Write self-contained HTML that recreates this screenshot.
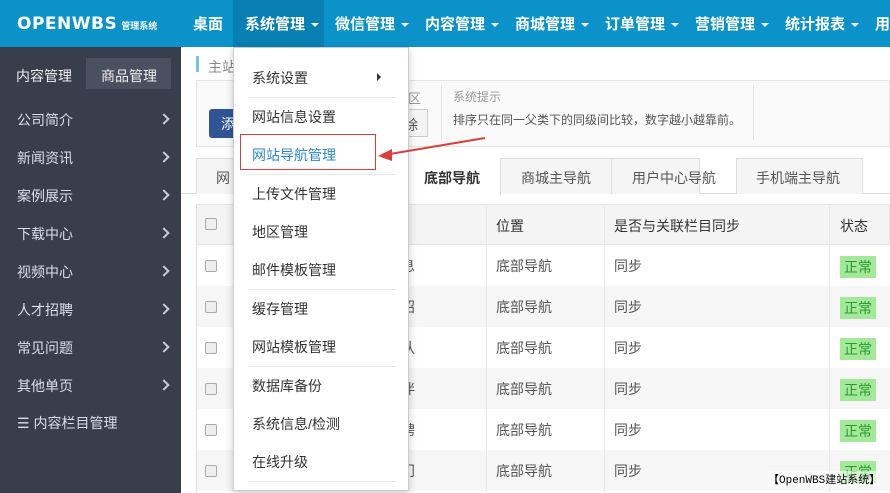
<!DOCTYPE html>
<html><head><meta charset="utf-8"><style>
*{margin:0;padding:0;box-sizing:border-box}
body{width:890px;height:493px;overflow:hidden;background:#fff;font-family:"Liberation Sans","Microsoft YaHei","Noto Sans CJK SC",sans-serif;font-size:14px;color:#333;position:relative}
.a{position:absolute}
.top{left:0;top:0;width:890px;height:47px;background:#0b93c9}
.nav{top:0;height:47px;line-height:49px;color:#fff;font-weight:bold;font-size:15px}
.car{display:inline-block;width:0;height:0;border-left:4px solid transparent;border-right:4px solid transparent;border-top:4px solid #fff;vertical-align:middle;margin-left:6px}
.side{left:0;top:47px;width:181px;height:446px;background:#393e4c}
.si{left:17px;color:#dde;font-size:14px}
.arr{left:160px;width:8px;height:8px;border-top:2px solid #ccd;border-right:2px solid #ccd;transform:rotate(45deg)}
.th{background:#f4f4f4}
.cb{width:12px;height:12px;border:1px solid #aaa;border-radius:2px;background:#eee}
.cell{font-size:14px;color:#555}
.ok{background:#a4e89a;color:#2a9a2a;padding:1px 4px;font-size:14px}
.menu{left:233px;top:47px;width:176px;height:444px;background:#fff;border:1px solid #ccc;box-shadow:0 3px 8px rgba(0,0,0,.2)}
.mi{left:18px;font-size:14px;color:#333}
.hr{left:14px;width:148px;height:1px;background:#e8e8e8}
</style></head><body>
<div class="a top"></div>
<div class="a" style="left:233px;top:0;width:91px;height:47px;background:#0880b4"></div>
<div class="a nav" style="left:17px;font-size:17px;letter-spacing:0.5px;font-family:'DejaVu Sans','Noto Sans CJK SC',sans-serif">OPENWBS<span style="font-size:9px;margin-left:4px;letter-spacing:0">管理系统</span></div>
<div class="a nav" style="left:193px">桌面</div>
<div class="a nav" style="left:245px">系统管理<span class="car"></span></div>
<div class="a nav" style="left:335px">微信管理<span class="car"></span></div>
<div class="a nav" style="left:425px">内容管理<span class="car"></span></div>
<div class="a nav" style="left:515px">商城管理<span class="car"></span></div>
<div class="a nav" style="left:605px">订单管理<span class="car"></span></div>
<div class="a nav" style="left:695px">营销管理<span class="car"></span></div>
<div class="a nav" style="left:785px">统计报表<span class="car"></span></div>
<div class="a nav" style="left:875px">用</div>

<div class="a side"></div>
<div class="a" style="left:86px;top:58px;width:85px;height:31px;background:#4b5060"></div>
<div class="a si" style="top:66px;left:16px;color:#eee">内容管理</div>
<div class="a si" style="top:66px;left:101px;color:#eee">商品管理</div>
<div class="a si" style="top:110px">公司简介</div><div class="a arr" style="top:115px"></div>
<div class="a si" style="top:148px">新闻资讯</div><div class="a arr" style="top:153px"></div>
<div class="a si" style="top:186px">案例展示</div><div class="a arr" style="top:191px"></div>
<div class="a si" style="top:224px">下载中心</div><div class="a arr" style="top:229px"></div>
<div class="a si" style="top:262px">视频中心</div><div class="a arr" style="top:267px"></div>
<div class="a si" style="top:300px">人才招聘</div><div class="a arr" style="top:305px"></div>
<div class="a si" style="top:338px">常见问题</div><div class="a arr" style="top:343px"></div>
<div class="a si" style="top:376px">其他单页</div><div class="a arr" style="top:381px"></div>
<div class="a si" style="top:413px">☰ 内容栏目管理</div>

<div class="a" style="left:196px;top:56px;width:3px;height:16px;background:#7cc0d8"></div>
<div class="a" style="left:208px;top:57px;color:#888">主站</div>
<div class="a" style="left:196px;top:80px;width:694px;height:67px;border:1px solid #e5e5e5;background:#fafafa"></div>
<div class="a" style="left:209px;top:109px;width:40px;height:29px;background:#2f5597;border-radius:3px;color:#fff;padding:5px 12px">添</div>
<div class="a" style="left:400px;top:109px;width:28px;height:28px;border:1px solid #ccc;background:#f4f4f4;color:#555;padding:5px 3px">除</div>
<div class="a" style="left:408px;top:88px;color:#999;font-size:13px">区</div>
<div class="a" style="left:441px;top:85px;width:1px;height:55px;background:#e5e5e5"></div>
<div class="a" style="left:453px;top:88px;color:#999;font-size:12px">系统提示</div>
<div class="a" style="left:453px;top:111px;color:#555;font-size:12px">排序只在同一父类下的同级间比较，数字越小越靠前。</div>
<div class="a" style="left:753px;top:85px;width:1px;height:55px;background:#e5e5e5"></div>

<div class="a" style="left:181px;top:193px;width:709px;height:1px;background:#ddd"></div>
<div class="a" style="left:196px;top:158px;width:504px;height:36px;border:1px solid #ddd;border-bottom:none;background:#f5f5f5"></div>
<div class="a" style="left:405px;top:158px;width:96px;height:37px;background:#fff;border-right:1px solid #ddd"></div>
<div class="a" style="left:216px;top:168px;color:#555">网</div>
<div class="a" style="left:424px;top:168px;font-weight:bold;color:#333">底部导航</div>
<div class="a" style="left:611px;top:158px;width:1px;height:36px;background:#ddd"></div>
<div class="a" style="left:736px;top:158px;width:127px;height:36px;border:1px solid #ddd;border-bottom:none;background:#f5f5f5"></div>
<div class="a" style="left:521px;top:168px;color:#555">商城主导航</div>
<div class="a" style="left:632px;top:168px;color:#555">用户中心导航</div>
<div class="a" style="left:756px;top:168px;color:#555">手机端主导航</div>

<div class="a th" style="left:196px;top:204px;width:694px;height:41px;border:1px solid #e5e5e5"></div>
<div class="a" style="left:196px;top:286px;width:694px;height:41px;background:#f6f6f6"></div>
<div class="a" style="left:196px;top:368px;width:694px;height:41px;background:#f6f6f6"></div>
<div class="a" style="left:196px;top:450px;width:694px;height:41px;background:#f6f6f6"></div>
<div class="a" style="left:196px;top:204px;width:1px;height:289px;background:#ddd"></div>
<div class="a" style="left:486px;top:204px;width:1px;height:289px;background:#e8e8e8"></div>
<div class="a" style="left:604px;top:204px;width:1px;height:289px;background:#e8e8e8"></div>
<div class="a" style="left:829px;top:204px;width:1px;height:289px;background:#e8e8e8"></div>
<div class="a" style="left:496px;top:216px">位置</div>
<div class="a" style="left:614px;top:216px">是否与关联栏目同步</div>
<div class="a" style="left:840px;top:216px">状态</div>
<div class="a cb" style="left:205px;top:218px"></div>
<div class="a cb" style="left:205px;top:260px"></div><div class="a cell" style="left:401px;top:256px">息</div><div class="a cell" style="left:496px;top:256px">底部导航</div><div class="a cell" style="left:614px;top:256px">同步</div><div class="a ok" style="left:840px;top:256px">正常</div>
<div class="a cb" style="left:205px;top:301px"></div><div class="a cell" style="left:401px;top:297px">招</div><div class="a cell" style="left:496px;top:297px">底部导航</div><div class="a cell" style="left:614px;top:297px">同步</div><div class="a ok" style="left:840px;top:297px">正常</div>
<div class="a cb" style="left:205px;top:342px"></div><div class="a cell" style="left:401px;top:338px">队</div><div class="a cell" style="left:496px;top:338px">底部导航</div><div class="a cell" style="left:614px;top:338px">同步</div><div class="a ok" style="left:840px;top:338px">正常</div>
<div class="a cb" style="left:205px;top:383px"></div><div class="a cell" style="left:401px;top:379px">伴</div><div class="a cell" style="left:496px;top:379px">底部导航</div><div class="a cell" style="left:614px;top:379px">同步</div><div class="a ok" style="left:840px;top:379px">正常</div>
<div class="a cb" style="left:205px;top:424px"></div><div class="a cell" style="left:401px;top:420px">聘</div><div class="a cell" style="left:496px;top:420px">底部导航</div><div class="a cell" style="left:614px;top:420px">同步</div><div class="a ok" style="left:840px;top:420px">正常</div>
<div class="a cb" style="left:205px;top:465px"></div><div class="a cell" style="left:401px;top:461px">门</div><div class="a cell" style="left:496px;top:461px">底部导航</div><div class="a cell" style="left:614px;top:461px">同步</div><div class="a ok" style="left:840px;top:461px">正常</div>
<div class="a" style="left:768px;top:471px;font-family:'Liberation Mono','Noto Sans CJK SC',monospace;font-size:11px;color:#000;background:rgba(255,255,255,.6)">【OpenWBS建站系统】</div>

<div class="a menu">
<div class="a mi" style="top:20px">系统设置</div><div class="a" style="left:143px;top:25px;border-top:4px solid transparent;border-bottom:4px solid transparent;border-left:4px solid #333"></div>
<div class="a hr" style="top:49px"></div>
<div class="a mi" style="top:59px">网站信息设置</div>
<div class="a mi" style="top:97px;color:#2a8ac8">网站导航管理</div>
<div class="a hr" style="top:126px"></div>
<div class="a mi" style="top:136px">上传文件管理</div>
<div class="a mi" style="top:174px">地区管理</div>
<div class="a mi" style="top:212px">邮件模板管理</div>
<div class="a hr" style="top:241px"></div>
<div class="a mi" style="top:251px">缓存管理</div>
<div class="a mi" style="top:289px">网站模板管理</div>
<div class="a hr" style="top:318px"></div>
<div class="a mi" style="top:328px">数据库备份</div>
<div class="a mi" style="top:366px">系统信息/检测</div>
<div class="a mi" style="top:404px">在线升级</div>
<div class="a hr" style="top:433px"></div>
</div>
<div class="a" style="left:240px;top:134px;width:136px;height:36px;border:1px solid #d9403a"></div>
<svg class="a" style="left:370px;top:130px" width="120" height="40"><line x1="14" y1="25" x2="115" y2="8" stroke="#d9403a" stroke-width="2"/><polygon points="8,26 22,19 22,31" fill="#d9403a"/></svg>
</body></html>
